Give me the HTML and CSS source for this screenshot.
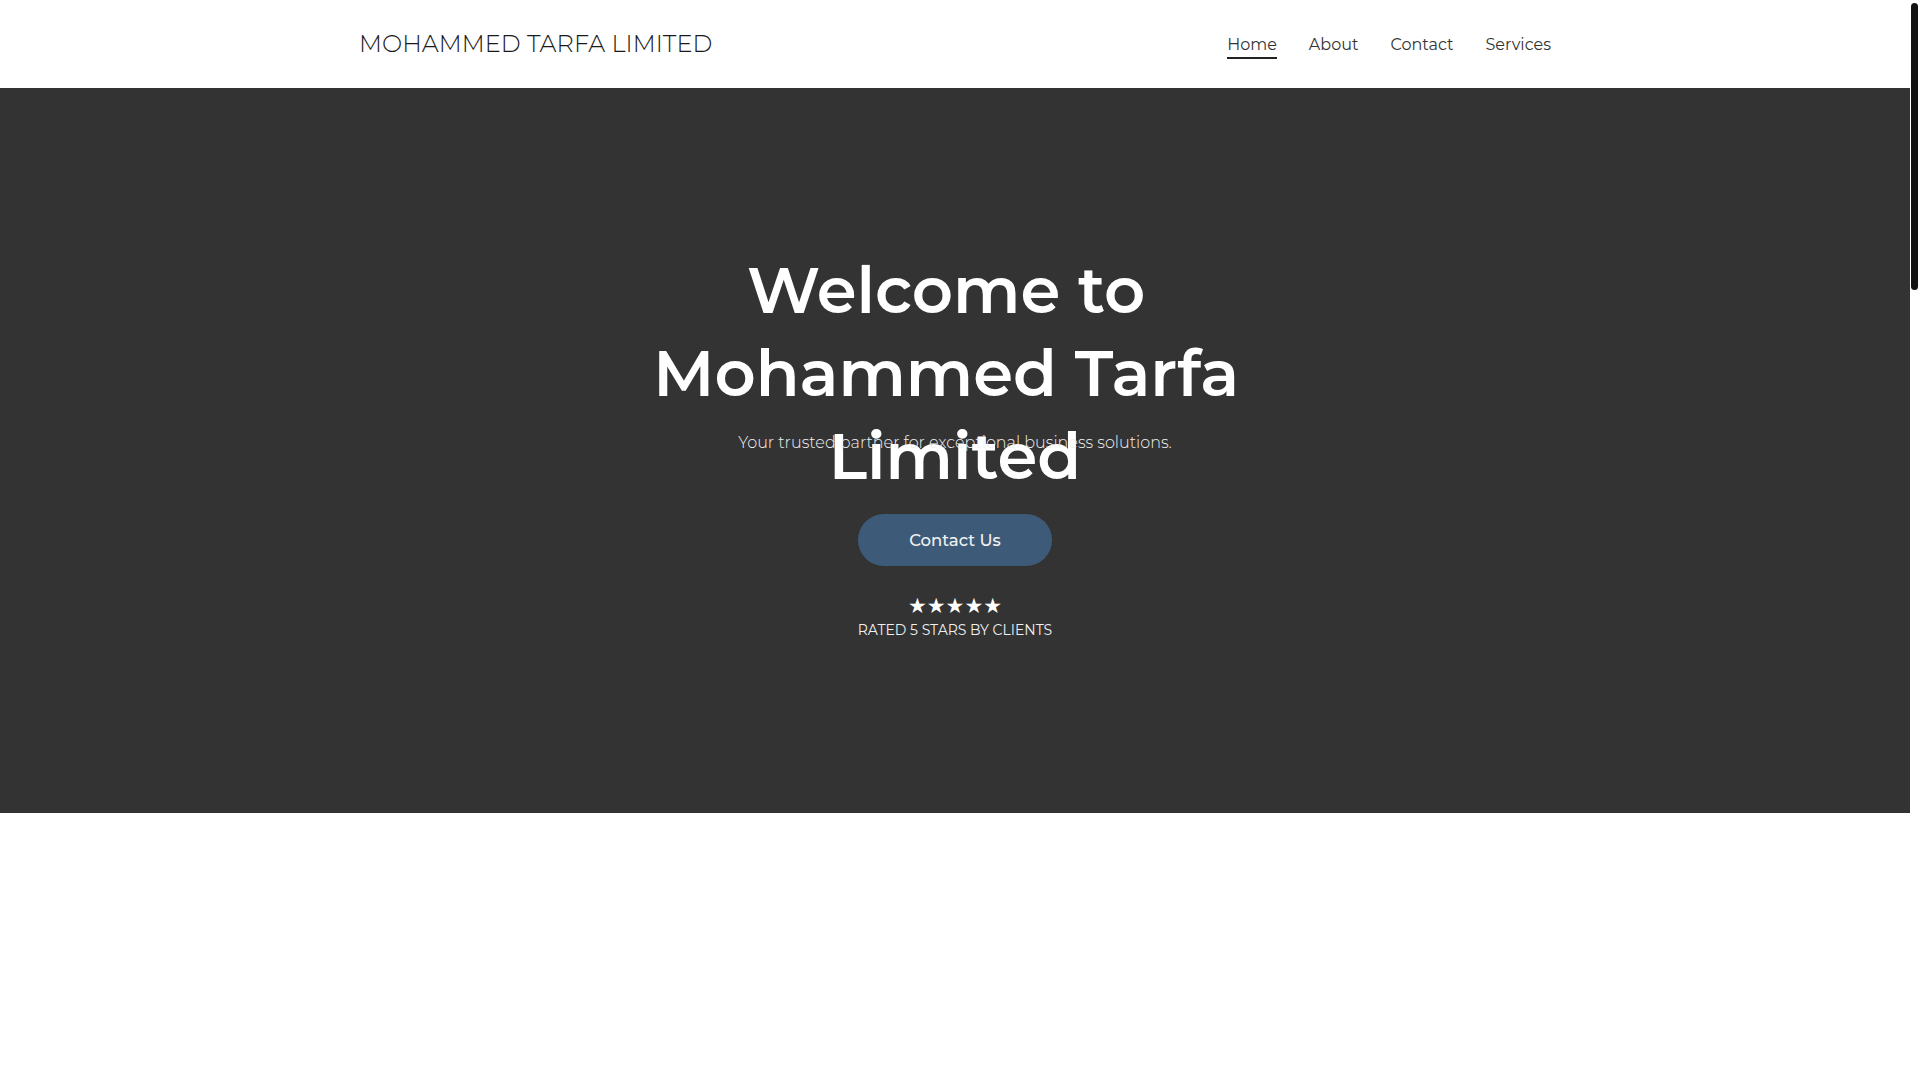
FILE: index.html
```html
<!DOCTYPE html>
<html lang="en">
<head>
<meta charset="utf-8">
<title>Mohammed Tarfa Limited</title>
<link rel="stylesheet" href="styles.css">
</head>
<body>
<header class="site-header">
  <div class="container header-inner">
    <a class="logo" href="#">MOHAMMED TARFA LIMITED</a>
    <nav class="main-nav">
      <a class="nav-link active" href="#">Home</a>
      <a class="nav-link" href="#">About</a>
      <a class="nav-link" href="#">Contact</a>
      <a class="nav-link" href="#">Services</a>
    </nav>
  </div>
</header>
<main>
  <section class="hero">
    <div class="hero-inner">
      <h1 class="hero-title">Welcome to Mohammed Tarfa Limited</h1>
      <p class="hero-sub">Your trusted partner for exceptional business solutions.</p>
      <a class="btn-primary" href="#">Contact Us</a>
      <div class="rating">
        <div class="stars">★★★★★</div>
        <div class="rating-text">RATED 5 STARS BY CLIENTS</div>
      </div>
    </div>
  </section>
  <section class="blank-section"></section>
</main>
<div class="scroll-thumb" aria-hidden="true"></div>
</body>
</html>
```

FILE: styles.css
```css
html {
  background: #ffffff;
}
body {
  margin: 0 10px 0 0;
  font-family: Montserrat, "Open Sans", "Noto Sans", sans-serif;
  color: #333333;
  background: #ffffff;
}
a {
  text-decoration: none;
  color: inherit;
}
.scroll-thumb {
  position: fixed;
  top: 3px;
  right: 2px;
  width: 7px;
  height: 287px;
  border-radius: 4px;
  background: #111111;
}
.container {
  max-width: 1192px;
  margin: 0 auto;
}
.site-header {
  height: 88px;
  background: #ffffff;
}
.header-inner {
  height: 100%;
  display: flex;
  align-items: center;
  justify-content: space-between;
}
.logo {
  font-size: 24px;
  font-weight: 300;
  color: #1a1a1a;
  letter-spacing: 0.05px;
  line-height: 1;
}
.main-nav {
  display: flex;
  gap: 32px;
  align-items: center;
}
.nav-link {
  font-size: 16px;
  line-height: 24px;
  color: #333333;
  padding-top: 4px;
  padding-bottom: 0;
  border-bottom: 2px solid transparent;
}
.nav-link.active {
  border-bottom-color: #222222;
}
.hero {
  background: #333333;
  height: 725px;
  display: flex;
  justify-content: center;
  color: #ffffff;
}
.hero-inner {
  padding-top: 161px;
  display: flex;
  flex-direction: column;
  align-items: center;
  text-align: center;
}
.hero-title {
  margin: 0;
  width: 640px;
  height: 166px;
  font-size: 64px;
  line-height: 83.2px;
  font-weight: 600;
  color: #ffffff;
  white-space: break-spaces;
}
.hero-sub {
  margin: 14px 0 0;
  font-size: 16px;
  line-height: 28px;
  font-weight: 300;
  color: #f0f0f0;
}
.btn-primary {
  margin-top: 57px;
  height: 52px;
  padding: 0 51px;
  border-radius: 26px;
  background: #3d5b78;
  color: #f2f2f2;
  font-size: 16.5px;
  font-weight: 500;
  display: flex;
  align-items: center;
}
.rating {
  margin-top: 28px;
  display: flex;
  flex-direction: column;
  align-items: center;
}
.stars {
  font-family: "DejaVu Sans", sans-serif;
  font-size: 21px;
  line-height: 24px;
  color: #ffffff;
}
.rating-text {
  margin-top: 2px;
  font-size: 14px;
  line-height: 20px;
  color: #f0f0f0;
}
.blank-section {
  height: 3247px;
  background: #ffffff;
}
```
